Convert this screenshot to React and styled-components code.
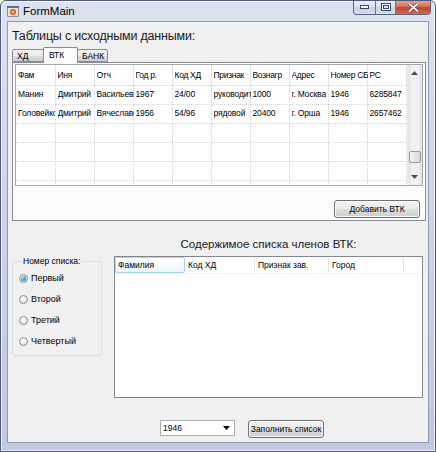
import React from "react";
import styled, { createGlobalStyle } from "styled-components";

const GlobalStyle = createGlobalStyle`
  html, body { margin: 0; padding: 0; }
  body { font-family: "Liberation Sans", Arial, sans-serif; background: #fff; }
  * { box-sizing: border-box; }
`;

const Window = styled.div`
  width: 436px;
  height: 452px;
  display: flex;
  flex-direction: column;
  border: 1px solid #4f5b7a;
  border-radius: 6px 6px 0 0;
  background: linear-gradient(180deg, #dde2f0 0%, #d0d6ea 40%, #c0c8e2 100%);
  box-shadow: inset 0 0 0 1px rgba(255, 255, 255, 0.7);
  overflow: hidden;
`;

const TitleBar = styled.div`
  height: 20px;
  flex-shrink: 0;
  display: flex;
  align-items: flex-start;
  padding-left: 5px;
`;

const AppIcon = styled.svg`
  width: 14px;
  height: 14px;
  margin-top: 3px;
  flex-shrink: 0;
`;

const Caption = styled.span`
  margin: 3px 0 0 3px;
  font-size: 11.5px;
  line-height: 14px;
  color: #000;
`;

const CaptionButtons = styled.div`
  margin: -1px 4px 0 auto;
  display: flex;
  height: 15px;
  border: 1px solid #5a6480;
  border-top: none;
  border-radius: 0 0 4px 4px;
  overflow: hidden;
`;

const CaptionButton = styled.div`
  width: ${(p) => p.$w}px;
  height: 100%;
  display: flex;
  align-items: center;
  justify-content: center;
  background: ${(p) =>
    p.$close
      ? "linear-gradient(180deg, #eaa99b 0%, #d9735f 45%, #c4432a 55%, #d06a4e 100%)"
      : "linear-gradient(180deg, #eef2fa 0%, #dbe2f0 45%, #c9d2e6 55%, #d6dded 100%)"};
  border-left: ${(p) => (p.$first ? "none" : "1px solid #6a7490")};
`;

const Client = styled.div`
  margin: 0 6px;
  height: 422px;
  flex-shrink: 0;
  border: 1px solid #8f99b3;
  background: #f0f0f0;
  padding: 0 2px 0 4px;
  display: flex;
  flex-direction: column;
`;

const Heading = styled.div`
  font-size: ${(p) => p.$size}px;
  letter-spacing: ${(p) => p.$spacing || 0}px;
  line-height: 18px;
  color: #1a1a1a;
  margin-top: ${(p) => p.$top}px;
  text-align: ${(p) => p.$align || "left"};
  white-space: nowrap;
`;

const TabStrip = styled.div`
  margin-top: 2px;
  height: 15px;
  display: flex;
  align-items: flex-end;
  position: relative;
  z-index: 1;
`;

const Tab = styled.div`
  width: ${(p) => p.$w}px;
  height: ${(p) => (p.$active ? 16 : 13)}px;
  margin-bottom: ${(p) => (p.$active ? -1 : 0)}px;
  margin-right: ${(p) => (p.$active ? -1 : 0)}px;
  margin-left: ${(p) => (p.$active ? -1 : 0)}px;
  padding: ${(p) => (p.$active ? "2px 0 0 5px" : "1px 0 0 4px")};
  font-size: 8.5px;
  line-height: 10px;
  color: #000;
  white-space: nowrap;
  border: 1px solid #898c95;
  border-bottom: ${(p) => (p.$active ? "none" : "1px solid #898c95")};
  border-radius: 2px 2px 0 0;
  background: ${(p) =>
    p.$active ? "#fbfbfb" : "linear-gradient(180deg, #f2f2f2 0%, #ebebeb 50%, #dddddd 51%, #cfcfcf 100%)"};
`;

const TabPanel = styled.div`
  height: 159px;
  flex-shrink: 0;
  border: 1px solid #898c95;
  background: #fbfbfb;
  padding: 1px 2px 0 2px;
  display: flex;
  flex-direction: column;
`;

const GridBox = styled.div`
  height: 122px;
  border: 1px solid #a3a6ad;
  background: #fff;
  display: flex;
  overflow: hidden;
`;

const GridTable = styled.table`
  width: 390px;
  table-layout: fixed;
  border-collapse: collapse;
  align-self: flex-start;
`;

const HeadCell = styled.th`
  width: 39px;
  height: 20px;
  padding: 0;
  font-weight: normal;
  text-align: left;
  border-right: 1px solid #e2e2e2;
  border-bottom: 1px dotted #cfcfcf;
`;

const Cell = styled.td`
  height: 19px;
  padding: 0 0 2px 0;
  border-right: 1px dotted #d3d3d3;
  border-bottom: 1px dotted #d3d3d3;
`;

const CellText = styled.div`
  width: 37px;
  margin-left: 2px;
  font-size: 8.5px;
  letter-spacing: ${(p) => (p.$head ? -0.3 : -0.15)}px;
  color: #000;
  white-space: nowrap;
  overflow: hidden;
`;

const ScrollBar = styled.div`
  width: 16px;
  margin-left: auto;
  display: flex;
  flex-direction: column;
  background: linear-gradient(90deg, #e3e3e3 0%, #f1f1f1 30%, #f1f1f1 70%, #e3e3e3 100%);
  border-left: 1px solid #ececec;
`;

const ScrollArrow = styled.div`
  height: 16px;
  display: flex;
  align-items: center;
  justify-content: center;
`;

const ScrollTrack = styled.div`
  flex: 1;
  padding-top: 70px;
`;

const Thumb = styled.div`
  height: 12px;
  margin: 0 1px;
  border: 1px solid #979797;
  border-radius: 2px;
  background: linear-gradient(90deg, #f3f3f3 0%, #e6e6e6 50%, #d8d8d8 100%);
`;

const ButtonRow = styled.div`
  margin-top: 14px;
  display: flex;
  justify-content: flex-end;
  padding-right: 3px;
`;

const Button = styled.div`
  width: ${(p) => p.$w}px;
  height: 18px;
  display: flex;
  align-items: center;
  justify-content: center;
  white-space: nowrap;
  font-size: 8.5px;
  color: #000;
  border: 1px solid #707070;
  border-radius: 3px;
  background: linear-gradient(180deg, #f2f2f2 0%, #ebebeb 50%, #dddddd 51%, #cfcfcf 100%);
  box-shadow: inset 0 0 0 1px rgba(255, 255, 255, 0.8);
`;

const Lower = styled.div`
  display: grid;
  grid-template-columns: 90px 309px;
  column-gap: 12px;
  grid-template-rows: auto 142px;
  row-gap: 3px;
  margin-top: 14px;
`;

const ListTitle = styled(Heading)`
  grid-column: 2;
`;

const GroupBox = styled.fieldset`
  grid-column: 1;
  grid-row: 2;
  margin: 0;
  height: 100px;
  padding: 6px 0 0 6px;
  border: 1px solid #d5dfe5;
  border-radius: 3px;
  display: flex;
  flex-direction: column;
  gap: 9px;
`;

const Legend = styled.legend`
  padding: 0 1px;
  margin-left: 3px;
  font-size: 8.5px;
  line-height: 10px;
  color: #000;
`;

const RadioRow = styled.label`
  display: flex;
  align-items: center;
  gap: 3px;
  height: 12px;
  font-size: 9px;
  color: #000;
`;

const RadioDot = styled.span`
  width: 9px;
  height: 9px;
  border-radius: 50%;
  border: 1px solid #8e8f8f;
  background: radial-gradient(circle at 40% 35%, #ffffff 0%, #e6e6e6 60%, #cfcfcf 100%);
  display: flex;
  align-items: center;
  justify-content: center;
  &::after {
    content: "";
    display: ${(p) => (p.$checked ? "block" : "none")};
    width: 5px;
    height: 5px;
    border-radius: 50%;
    background: radial-gradient(circle at 35% 35%, #9ee3ff 0%, #2c8fc4 60%, #0f5c8a 100%);
  }
`;

const ListView = styled.div`
  grid-column: 2;
  grid-row: 2;
  border: 1px solid #828790;
  background: #fff;
`;

const ListHeader = styled.div`
  height: 17px;
  display: flex;
  border-bottom: 1px dotted #e6e6e6;
`;

const ListCol = styled.div`
  width: ${(p) => p.$w}px;
  padding: 2px 0 0 2px;
  font-size: 8.5px;
  color: #000;
  white-space: nowrap;
  border: 1px solid ${(p) => (p.$hot ? "#a8d4ee" : "transparent")};
  border-right: 1px solid ${(p) => (p.$hot ? "#a8d4ee" : "#e5e5e5")};
  border-radius: ${(p) => (p.$hot ? "2px" : "0")};
  background: ${(p) => (p.$hot ? "linear-gradient(180deg, #ffffff 0%, #eaf6fd 100%)" : "transparent")};
`;

const BottomRow = styled.div`
  margin-top: 22px;
  padding-left: 148px;
  display: flex;
  align-items: flex-start;
  gap: 13px;
`;

const Combo = styled.div`
  width: 75px;
  height: 16px;
  border: 1px solid #abadb3;
  background: #fff;
  display: flex;
  align-items: center;
  justify-content: space-between;
  padding: 0 4px 0 2px;
  font-size: 8.5px;
  color: #000;
`;

const head = ["Фам", "Иня", "Отч", "Год р.", "Код ХД", "Признак", "Вознагр", "Адрес", "Номер СБ", "РС"];
const rows = [
  ["Манин", "Дмитрий", "Васильевич", "1967", "24/00", "руководитель", "1000", "г. Москва", "1946", "6285847"],
  ["Головейко", "Дмитрий", "Вячеславович", "1956", "54/96", "рядовой", "20400", "г. Орша", "1946", "2657462"],
  Array(10).fill(""),
  Array(10).fill(""),
  Array(10).fill(""),
  Array(10).fill(""),
];
const radios = ["Первый", "Второй", "Третий", "Четвертый"];
const listCols = [
  { t: "Фамилия", w: 70, hot: true },
  { t: "Код ХД", w: 70 },
  { t: "Признак зав.", w: 74 },
  { t: "Город", w: 75 },
];

const Arrow = ({ up }) => (
  <svg width="7" height="4" viewBox="0 0 7 4">
    <path d={up ? "M0 4 L3.5 0 L7 4 Z" : "M0 0 L3.5 4 L7 0 Z"} fill="#4d4d4d" />
  </svg>
);

export default function App() {
  return (
    <>
      <GlobalStyle />
      <Window>
        <TitleBar>
          <AppIcon viewBox="0 0 14 14">
            <rect x="1" y="2" width="12" height="11" rx="1.5" fill="#8a8f99" />
            <rect x="2" y="4" width="10" height="8" fill="#e8e2d2" />
            <circle cx="7" cy="8" r="3" fill="#d9532c" />
            <circle cx="7" cy="8" r="1.5" fill="#f6c443" />
            <rect x="1" y="2" width="12" height="2" fill="#5c6f9e" />
          </AppIcon>
          <Caption>FormMain</Caption>
          <CaptionButtons>
            <CaptionButton $w={21} $first>
              <svg width="9" height="4" viewBox="0 0 9 4">
                <rect x="0.5" y="0.5" width="8" height="3" fill="#fff" stroke="#3b4766" />
              </svg>
            </CaptionButton>
            <CaptionButton $w={20}>
              <svg width="10" height="8" viewBox="0 0 10 8">
                <rect x="0.5" y="0.5" width="9" height="7" fill="#fff" stroke="#3b4766" />
                <rect x="2.5" y="2.5" width="5" height="3" fill="#dbe2f0" stroke="#3b4766" />
              </svg>
            </CaptionButton>
            <CaptionButton $w={35} $close>
              <svg width="11" height="9" viewBox="0 0 11 9">
                <path d="M1 0.5 L10 8.5 M10 0.5 L1 8.5" stroke="#5a2a22" strokeWidth="3" />
                <path d="M1 0.5 L10 8.5 M10 0.5 L1 8.5" stroke="#fff" strokeWidth="1.8" />
              </svg>
            </CaptionButton>
          </CaptionButtons>
        </TitleBar>

        <Client>
          <Heading $top={5} $size={12.5} $spacing={-0.2}>
            Таблицы с исходными данными:
          </Heading>
          <TabStrip>
            <Tab $w={32}>ХД</Tab>
            <Tab $w={35} $active>ВТК</Tab>
            <Tab $w={31}>БАНК</Tab>
          </TabStrip>
          <TabPanel>
            <GridBox>
              <GridTable>
                <thead>
                  <tr>
                    {head.map((h) => (
                      <HeadCell key={h}>
                        <CellText $head>{h}</CellText>
                      </HeadCell>
                    ))}
                  </tr>
                </thead>
                <tbody>
                  {rows.map((r, i) => (
                    <tr key={i}>
                      {r.map((c, j) => (
                        <Cell key={j}>
                          <CellText>{c}</CellText>
                        </Cell>
                      ))}
                    </tr>
                  ))}
                </tbody>
              </GridTable>
              <ScrollBar>
                <ScrollArrow>
                  <Arrow up />
                </ScrollArrow>
                <ScrollTrack>
                  <Thumb />
                </ScrollTrack>
                <ScrollArrow>
                  <Arrow />
                </ScrollArrow>
              </ScrollBar>
            </GridBox>
            <ButtonRow>
              <Button $w={86}>Добавить ВТК</Button>
            </ButtonRow>
          </TabPanel>

          <Lower>
            <ListTitle $top={0} $size={11.5} $align="center">
              Содержимое списка членов ВТК:
            </ListTitle>
            <GroupBox>
              <Legend>Номер списка:</Legend>
              {radios.map((r, i) => (
                <RadioRow key={r}>
                  <RadioDot $checked={i === 0} />
                  {r}
                </RadioRow>
              ))}
            </GroupBox>
            <ListView>
              <ListHeader>
                {listCols.map((c) => (
                  <ListCol key={c.t} $w={c.w} $hot={c.hot}>
                    {c.t}
                  </ListCol>
                ))}
              </ListHeader>
            </ListView>
          </Lower>

          <BottomRow>
            <Combo>
              <span>1946</span>
              <svg width="7" height="4" viewBox="0 0 7 4">
                <path d="M0 0 L3.5 4 L7 0 Z" fill="#000" />
              </svg>
            </Combo>
            <Button $w={76}>Заполнить список</Button>
          </BottomRow>
        </Client>
      </Window>
    </>
  );
}
